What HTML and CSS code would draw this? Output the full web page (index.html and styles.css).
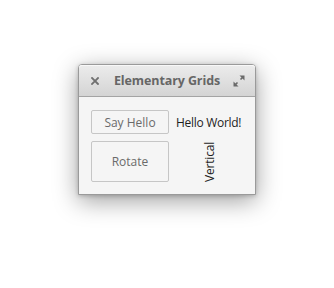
FILE: index.html
```html
<!DOCTYPE html>
<html>
<head>
<meta charset="utf-8">
<link rel="stylesheet" href="styles.css">
</head>
<body>
<div class="window">
  <div class="header">
    <svg class="close" width="8" height="8" viewBox="0 0 8 8"><path d="M1 1 L7 7 M7 1 L1 7" stroke="#707070" stroke-width="1.8" stroke-linecap="square"/></svg>
    <div class="title">Elementary Grids</div>
    <svg class="max" width="14" height="14" viewBox="0 0 14 14">
      <path d="M7.5 1.5 H12.5 V6.5 Z" fill="#6a6a6a"/><path d="M11.5 2.5 L8.5 5.5" stroke="#6a6a6a" stroke-width="1.6"/>
      <path d="M1.5 7.5 V12.5 H6.5 Z" fill="#6a6a6a"/><path d="M2.5 11.5 L5.5 8.5" stroke="#6a6a6a" stroke-width="1.6"/>
    </svg>
  </div>
  <div class="content">
    <button class="btn">Say Hello</button>
    <div class="label">Hello World!</div>
    <button class="btn tall">Rotate</button>
    <div class="vlabel"><span>Vertical</span></div>
  </div>
</div>
</body>
</html>
```
FILE: styles.css
```css
html, body { margin: 0; padding: 0; background: #ffffff; }
body { width: 334px; height: 288px; overflow: hidden; font-family: "Open Sans", sans-serif; }
.window {
  margin: 64px 0 0 78px;
  width: 178px;
  height: 131px;
  box-sizing: border-box;
  border: 1px solid #9a9a9a;
  border-radius: 4px 4px 0 0;
  background: #f5f5f5;
  box-shadow: 0 6px 24px rgba(0,0,0,0.38), 0 1px 4px rgba(0,0,0,0.2);
  display: flex;
  flex-direction: column;
}
.header {
  height: 32px;
  box-sizing: border-box;
  border-bottom: 1px solid #a4a4a4;
  border-radius: 3px 3px 0 0;
  background: linear-gradient(#ececec, #d4d4d4);
  display: flex;
  align-items: center;
  padding: 0 9px 0 12px;
  box-shadow: inset 0 1px 0 #f8f8f8;
}
.close { flex: none; }
.title {
  flex: 1;
  text-align: center;
  font-weight: bold;
  font-size: 12.5px;
  color: #666666;
  padding-left: 3px;
  letter-spacing: -0.1px;
}
.max { flex: none; }
.content {
  flex: 1;
  padding: 13px 12px 12px 12px;
  display: grid;
  grid-template-columns: 78px 66px;
  grid-template-rows: 24px 41px;
  column-gap: 7px;
  row-gap: 7px;
}
.btn {
  font-family: "Open Sans", sans-serif;
  font-size: 12px;
  color: #6a6a6a;
  background: #f5f5f5;
  border: 1px solid #c6c6c6;
  border-radius: 2px;
  padding: 0;
  margin: 0;
}
.label {
  font-size: 12px;
  color: #1e1e1e;
  display: flex;
  align-items: center;
  white-space: nowrap;
  letter-spacing: -0.3px;
}
.vlabel {
  display: flex;
  align-items: center;
  justify-content: center;
  font-size: 12px;
  color: #1e1e1e;
  white-space: nowrap;
}
.vlabel span {
  writing-mode: vertical-rl;
  transform: rotate(180deg);
  letter-spacing: -0.2px;
}
```
